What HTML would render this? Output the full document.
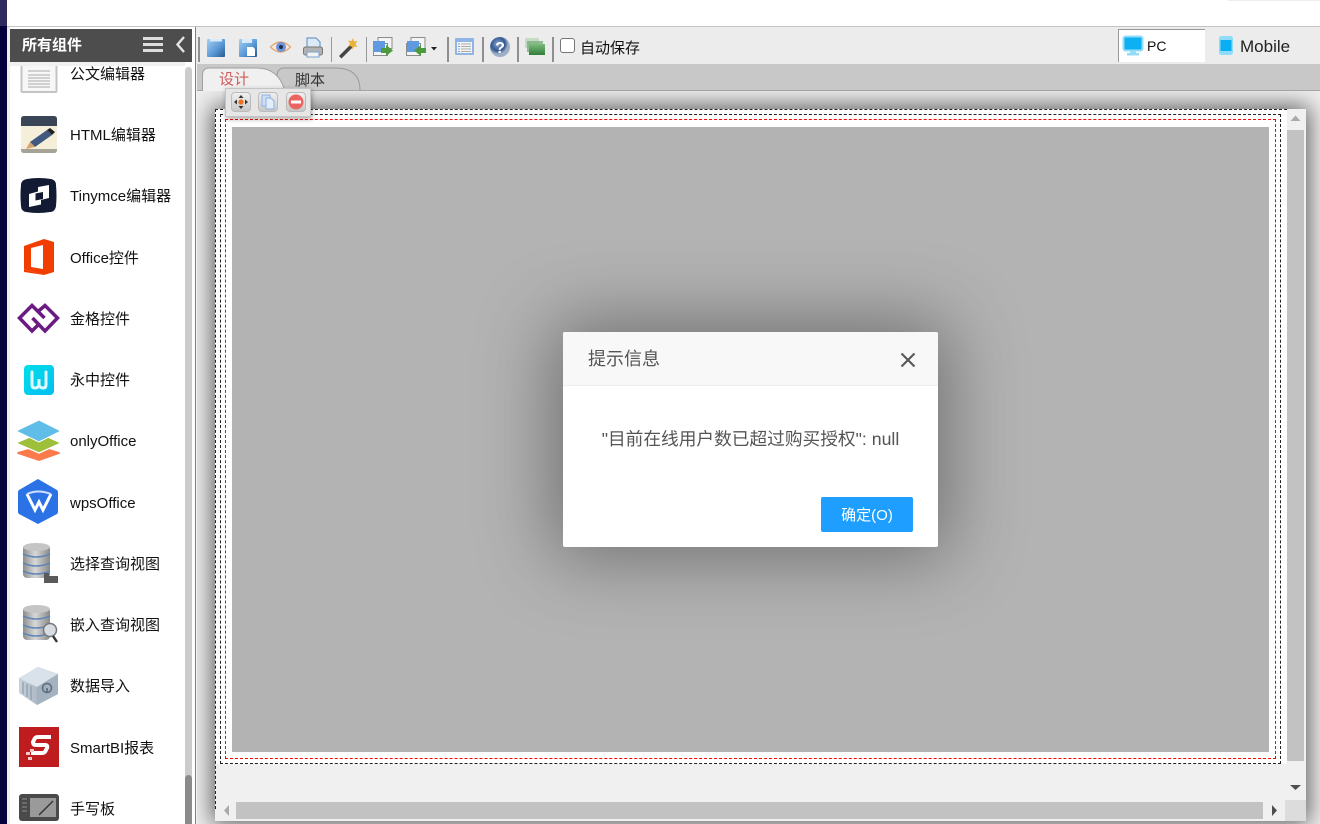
<!DOCTYPE html>
<html><head><meta charset="utf-8">
<style>
html,body{margin:0;padding:0;width:1320px;height:824px;overflow:hidden;background:#fff;font-family:"Liberation Sans","Noto Sans CJK SC",sans-serif;color:#111}
div,svg,span{position:absolute;box-sizing:border-box}
.l{left:70px;margin-top:1px;font-size:15px;line-height:22px;white-space:nowrap;color:#111}
.sep{width:2px;background:#8f8f8f;top:37px;height:25px}
.sep.t{width:1px;background:#999}
.dash{border:1px dashed #222}
</style></head><body>
<div style="left:0;top:0;width:7px;height:26px;background:#2e2a5e"></div>
<div style="left:0;top:26px;width:7px;height:798px;background:#05003c"></div>
<div style="left:7px;top:26px;width:3px;height:798px;background:#eee"></div>
<div style="left:1228px;top:0;width:92px;height:1px;background:#eee"></div>
<div style="left:7px;top:26px;width:1313px;height:1px;background:#c4c4c4"></div>
<div style="left:10px;top:27px;width:185px;height:797px;background:#fff;overflow:hidden" id="side"></div>

<!-- toolbar -->
<div style="left:196px;top:27px;width:1124px;height:37px;background:#ececec"></div>
<div style="left:196px;top:64px;width:1124px;height:26px;background:#c8c8c8"></div>
<div style="left:197px;top:90px;width:1123px;height:1px;background:#a5a5a5"></div>
<div style="left:197px;top:91px;width:1123px;height:733px;background:#efefef;overflow:hidden">
  <div style="left:18px;top:18px;width:1091px;height:712px;background:#f0f0f0;box-shadow:0 0 22px 3px rgba(0,0,0,.62)"></div>
</div>
<div style="left:195px;top:27px;width:1px;height:797px;background:#808080"></div>
<div style="left:196px;top:64px;width:1px;height:760px;background:#f2f2f2"></div>

<!-- left panel -->
<div style="left:10px;top:62px;width:175px;height:4px;background:#f0f0f0"></div>
<div style="left:10px;top:29px;width:182px;height:33px;background:#4d4d4d"></div>
<div style="left:22px;top:35px;font-size:15px;font-weight:700;color:#fff;line-height:22px;white-space:nowrap">所有组件</div>
<div style="left:143px;top:37px;width:20px;height:3px;background:#ddd"></div>
<div style="left:143px;top:43px;width:20px;height:3px;background:#ddd"></div>
<div style="left:143px;top:49px;width:20px;height:3px;background:#ddd"></div>
<svg style="left:174px;top:35px" width="14" height="19"><path d="M10 2L3.500 9.500L10 17" fill="none" stroke="#e6e6e6" stroke-width="2.400"/></svg>
<div style="left:185px;top:67px;width:7px;height:757px;background:#ccc;border-radius:4px 4px 0 0"></div>
<div style="left:185px;top:775px;width:7px;height:49px;background:#8a8a8a;border-radius:4px 4px 0 0"></div>

<!-- side icons -->
<svg style="left:0;top:66px;" width="185" height="758" viewBox="0 66 185 758">
  <defs>
    <linearGradient id="db" x1="0" x2="1" y1="0" y2="0"><stop offset="0" stop-color="#8d8d8d"/><stop offset=".45" stop-color="#d8d8d8"/><stop offset="1" stop-color="#888"/></linearGradient>
    <linearGradient id="sf" x1="0" x2="1" y1="0" y2="0"><stop offset="0" stop-color="#c8d3dc"/><stop offset="1" stop-color="#8c9cab"/></linearGradient>
    <linearGradient id="yz" x1="0" x2="1" y1="0" y2="1"><stop offset="0" stop-color="#00dfe8"/><stop offset="1" stop-color="#05bdf2"/></linearGradient>
    <g id="dbs">
      <rect x="23" y="3" width="27" height="33" rx="4" fill="url(#db)"/>
      <ellipse cx="36.500" cy="5" rx="13.500" ry="4" fill="#c5c5c5"/>
      <path d="M23 12q13 6 27 0M23 21q13 6 27 0M23 29q13 6 27 0" fill="none" stroke="#5f86b8" stroke-width="1.600"/>
    </g>
  </defs>
  <!-- doc -->
  <rect x="21.500" y="60" width="35" height="32" rx="1" fill="#f7f7f7" stroke="#c4c4c4" stroke-width="2"/>
  <path d="M28 71h22M28 75h22M28 78h22M28 81h22M28 84h22M28 87h22" stroke="#aaa" stroke-width="1.100"/>
  <!-- html -->
  <rect x="21" y="116" width="36" height="37" rx="3" fill="#f5efd9"/>
  <path d="M21 119q0-3 3-3h30q3 0 3 3v7H21z" fill="#3a4656"/>
  <path d="M21 149h36v1q0 3-3 3H24q-3 0-3-3z" fill="#a5a296"/>
  <path d="M30 142l17-12 5 5-17 12z" fill="#41597e"/><path d="M26 149l4-7 5 5z" fill="#d6a36e"/><path d="M47 130l3-2 5 4-3 3z" fill="#222"/>
  <!-- tiny -->
  <path d="M27 179q11-2 24 0q5 1 5 6q1 11 0 21q-1 6-6 6q-12 2-24 0q-5-1-5-6q-1-11 0-21q0-5 6-6z" fill="#121b33"/>
  <path d="M29 194L38 191.500V187L49 185V198L41 200V204.500L29 207Z" fill="#fff"/>
  <path d="M35.500 193.500L43 192V199L35.500 200.500Z" fill="#121b33"/>
  <!-- office -->
  <path d="M24 246L44 239l10 3v30l-10 3-20-6z" fill="#f23d00"/><path d="M31 248l12-3v24l-12-2z" fill="#fff"/><path d="M24 269l20 6-20-3z" fill="#f23d00"/>
  <!-- jinge -->
  <path d="M38 325L32 331 19.500 318 32 305.500 44.500 318" fill="none" stroke="#6a1a82" stroke-width="3.500"/>
  <path d="M38 311.500L45 305.500 57.500 318 45 331 32.500 318" fill="none" stroke="#6a1a82" stroke-width="3.500"/>
  <!-- yozo -->
  <rect x="24" y="365" width="30" height="30" rx="4" fill="url(#yz)"/>
  <path d="M32 372v13q0 3 3 3t4-3v-6v6q1 3 4 3t3-3v-13" fill="none" stroke="#dff9ff" stroke-width="3" stroke-linecap="round"/>
  <!-- only -->
  <path d="M39 446l20 6q2 1 0 2l-20 7-21-7q-2-1 0-2z" fill="#fb7a4b"/>
  <path d="M39 433l20 9q2 1 0 2l-20 9-21-9q-2-1 0-2z" fill="#9ebf3a" stroke="#fff" stroke-width="1.300"/>
  <path d="M39 420l20 10q2 1 0 2l-20 10-21-10q-2-1 0-2z" fill="#5fbde8" stroke="#fff" stroke-width="1"/>
  <!-- wps -->
  <path d="M38 479l19 11q1 1 1 2v20q0 1-1 2l-19 10-19-10q-1-1-1-2v-20q0-1 1-2z" fill="#2a72e6"/>
  <path d="M27 494l8 16 4-8 4 8 8-16" fill="none" stroke="#fff" stroke-width="3"/><path d="M27 494q11-5 24 0" fill="none" stroke="#cfe0ff" stroke-width="2"/>
  <!-- db1 -->
  <use href="#dbs" y="542"/>
  <path d="M44 573h5v3h9v7H44z" fill="#5a5a5a"/>
  <!-- db2 -->
  <use href="#dbs" y="604"/>
  <circle cx="50" cy="630" r="6.500" fill="#d7dde2" stroke="#777" stroke-width="1.500"/><path d="M53 636l4 6" stroke="#333" stroke-width="2.400"/>
  <!-- safe -->
  <path d="M19 678L38 667l20 7v20L37 705 19 693z" fill="url(#sf)"/>
  <path d="M19 678l18 9 21-13-20-7z" fill="#d9e2ea"/><path d="M37 687l21-13v20L37 705z" fill="#a4b2bf"/>
  <circle cx="47" cy="688" r="4.500" fill="none" stroke="#596b7c" stroke-width="1.500"/><path d="M47 688v5" stroke="#596b7c" stroke-width="1.600"/>
  <path d="M23 682v12M27 684v13M31 686v14" stroke="#8c9cab" stroke-width="1.200"/>
  <!-- smart -->
  <rect x="19" y="727" width="40" height="40" fill="#be1c1f"/>
  <path d="M51 737H38q-3 0-4 3l-1 2q0 3 3 3H45q3 0 2 3l-1 2q-1 3-4 3H31" fill="none" stroke="#fff" stroke-width="4"/>
  <path d="M30 749h4v3h-4zM26 752h4v3h-4zM28 757h4v3h-4z" fill="#f3c8c8"/>
  <!-- tablet -->
  <rect x="19" y="794" width="40" height="27" rx="3" fill="#4a4a4a"/>
  <rect x="30" y="798" width="26" height="19" fill="#9a9a9a"/>
  <path d="M22 799h5M22 803h5M22 807h5M22 811h5" stroke="#777" stroke-width="1.500"/>
  <path d="M39 815l14-14" stroke="#333" stroke-width="1.400"/>
</svg>
<div class="l" style="top:63px">公文编辑器</div>
<div class="l" style="top:124px">HTML编辑器</div>
<div class="l" style="top:185px">Tinymce编辑器</div>
<div class="l" style="top:247px">Office控件</div>
<div class="l" style="top:308px">金格控件</div>
<div class="l" style="top:369px">永中控件</div>
<div class="l" style="top:430px">onlyOffice</div>
<div class="l" style="top:492px">wpsOffice</div>
<div class="l" style="top:553px">选择查询视图</div>
<div class="l" style="top:614px">嵌入查询视图</div>
<div class="l" style="top:675px">数据导入</div>
<div class="l" style="top:737px">SmartBI报表</div>
<div class="l" style="top:798px">手写板</div>

<!-- toolbar seps -->
<div class="sep" style="left:198px"></div>
<div class="sep t" style="left:331px"></div>
<div class="sep t" style="left:366px"></div>
<div class="sep" style="left:447px"></div>
<div class="sep" style="left:482px"></div>
<div class="sep" style="left:517px"></div>
<div class="sep" style="left:552px"></div>

<svg style="left:196px;top:27px" width="360" height="37" viewBox="196 27 360 37">
  <defs>
    <linearGradient id="bl" x1="0" y1="0" x2="1" y2="1"><stop offset="0" stop-color="#a9d0f0"/><stop offset=".55" stop-color="#5a9ad8"/><stop offset="1" stop-color="#27598f"/></linearGradient>
    <linearGradient id="gr" x1="0" y1="0" x2="0" y2="1"><stop offset="0" stop-color="#7dbb7d"/><stop offset="1" stop-color="#2f7f3a"/></linearGradient>
    <radialGradient id="hp" cx=".4" cy=".35"><stop offset="0" stop-color="#8aa6d2"/><stop offset=".7" stop-color="#33578f"/><stop offset="1" stop-color="#9eaec6"/></radialGradient>
  </defs>
  <rect x="207" y="39" width="18" height="18" rx="1" fill="url(#bl)"/><rect x="210" y="39" width="12" height="2.500" fill="#d9ebfa"/>
  <rect x="239" y="39" width="18" height="18" rx="1" fill="url(#bl)"/><rect x="242" y="39" width="10" height="4" fill="#d9ebfa"/><path d="M247 47h6l2 2v7h-8z" fill="#fff"/>
  <path d="M270.500 47q10-10 20 0q-10 10-20 0z" fill="#fbeadb" stroke="#e0a878" stroke-width="1.300"/><circle cx="281" cy="47" r="5" fill="#6b94d8"/><circle cx="281" cy="47" r="2" fill="#1d2e55"/>
  <path d="M307 38h9l4 4v6h-13z" fill="#dce9f6" stroke="#6f9bc9" stroke-width="1.200"/>
  <rect x="303.500" y="47" width="19" height="8" rx="2" fill="#b2b2b2" stroke="#777"/><rect x="307" y="52" width="12" height="5" fill="#f3f3f3" stroke="#7aa3cf"/>
  <path d="M339 56l11-11 2.500 2.500-11 11z" fill="#444"/><path d="M353 38l1 3.500 3.500-.5-2 3 2 3-3.500-.5-1.500 3-1-3.500-3.500.5 2-3-2-3 3.500.5z" fill="#e8b23a"/>
  <rect x="378" y="37.500" width="14" height="11" fill="#f4f4f4" stroke="#8c8c8c"/><rect x="373.500" y="43.500" width="14" height="12" fill="#f4f4f4" stroke="#8c8c8c"/><rect x="373" y="41" width="12" height="11" fill="#5f9ae0"/><path d="M381 48h5v-3l7 5.500-7 5.500v-3h-5z" fill="#4d9a3c"/>
  <rect x="411" y="37.500" width="14" height="11" fill="#f4f4f4" stroke="#8c8c8c"/><rect x="406.500" y="43.500" width="14" height="12" fill="#f4f4f4" stroke="#8c8c8c"/><rect x="407" y="41" width="12" height="11" fill="#5f9ae0"/><path d="M426 48h-5v-3l-7 5.500 7 5.500v-3h5z" fill="#4d9a3c"/>
  <path d="M431 47h6l-3 3.500z" fill="#222"/>
  <rect x="455" y="38" width="19" height="17" rx="1" fill="#8fb5e6"/><rect x="457" y="42" width="15" height="11" fill="#f4f4f4"/><path d="M461 44h10M461 46.500h10M461 49h10M461 51.500h10" stroke="#aaa"/><path d="M458 44h2M458 46.500h2M458 49h2M458 51.500h2" stroke="#7aa3d8"/>
  <circle cx="500" cy="47" r="10" fill="url(#hp)"/>
  <text x="500" y="53" font-family="Liberation Sans" font-weight="700" font-size="16" text-anchor="middle" fill="#fff">?</text>
  <rect x="525" y="38" width="14" height="10" fill="#c4dcc4"/><rect x="527" y="41" width="16" height="11" fill="#7dae80" opacity=".8"/><rect x="529" y="44" width="16" height="11" fill="url(#gr)"/>
</svg>
<div style="left:560px;top:38px;width:15px;height:15px;background:#fff;border:1px solid #767676;border-radius:3px"></div>
<div style="left:580px;top:38px;font-size:15px;line-height:22px;white-space:nowrap">自动保存</div>

<!-- PC/mobile -->
<div style="left:1118px;top:29px;width:87px;height:33px;background:#fff;border-top:1px solid #999;border-left:1px solid #999"></div>
<svg style="left:1122px;top:35px" width="114" height="22" viewBox="1122 35 114 22">
  <rect x="1123.500" y="36.500" width="19" height="14" rx="2" fill="#0db0f2" stroke="#92dcf8" stroke-width="2"/>
  <path d="M1130 51h6v2h3v2.500h-12V53h3z" fill="#92dcf8"/>
  <rect x="1219" y="36" width="14" height="19" rx="2.500" fill="#8fdcf9"/><rect x="1220.500" y="40" width="11" height="11" fill="#0aaef2"/>
</svg>
<div style="left:1147px;top:36px;font-size:14px;line-height:21px;white-space:nowrap">PC</div>
<div style="left:1240px;top:35px;font-size:17px;line-height:23px;white-space:nowrap;color:#222">Mobile</div>

<!-- tabs -->
<svg style="left:196px;top:64px" width="170" height="28" viewBox="196 64 170 28">
  <path d="M277 89.500V76q0-8 8-8h50q25 0 25 22" fill="#c8c8c8" stroke="#9a9a9a"/>
  <path d="M202.500 90.500V75q0-7 7-7h47q22 0 28 22" fill="#f0f0f0" stroke="#a0a0a0"/>
  <rect x="203" y="88" width="80" height="3" fill="#f0f0f0"/>
</svg>
<div style="left:219px;top:69px;font-size:15px;line-height:22px;color:#cf5a5a;white-space:nowrap">设计</div>
<div style="left:295px;top:70px;font-size:15px;line-height:22px;color:#333;white-space:nowrap">脚本</div>

<!-- canvas -->
<div style="left:215px;top:109px;width:1072px;height:655px;background:#fff"></div>
<div class="dash" style="left:215px;top:109px;width:1072px;height:700px;border-right:0;border-bottom:0"></div>
<div class="dash" style="left:220px;top:114px;width:1061px;height:650px;background:#fff"></div>
<div style="left:225px;top:119px;width:1051px;height:640px;border:1px dashed #f00;background:#fff"></div>
<div style="left:232px;top:127px;width:1037px;height:625px;background:#b3b3b3"></div>

<!-- scrollbars -->
<div style="left:1287px;top:130px;width:17px;height:631px;background:#c2c2c2"></div>
<svg style="left:1285px;top:110px" width="21" height="20"><path d="M10.500 5.500l5 5.500h-10z" fill="#aaa"/></svg>
<svg style="left:1285px;top:778px" width="21" height="20"><path d="M5 7h11l-5.500 5z" fill="#4f4f4f"/></svg>
<div style="left:236px;top:802px;width:1027px;height:17px;background:#c2c2c2"></div>
<svg style="left:216px;top:802px" width="20" height="17"><path d="M13 3v11l-5-5.500z" fill="#aaa"/></svg>
<svg style="left:1265px;top:802px" width="20" height="17"><path d="M7 3v11l5-5.500z" fill="#4f4f4f"/></svg>
<div style="left:1285px;top:800px;width:21px;height:21px;background:#dcdcdc"></div>

<!-- floating tool -->
<div style="left:225px;top:88px;width:86px;height:29px;background:#e6e6e6;border:1px solid #c4c4c4;box-shadow:1px 2px 5px rgba(0,0,0,.35)"></div>
<div style="left:231px;top:92px;width:20px;height:20px;border-radius:4px;background:linear-gradient(#f0f0f0,#c8c8c8);border:1px solid #bbb"></div>
<div style="left:258px;top:92px;width:20px;height:20px;border-radius:4px;background:linear-gradient(#f0f0f0,#c8c8c8);border:1px solid #bbb"></div>
<div style="left:286px;top:92px;width:20px;height:20px;border-radius:4px;background:linear-gradient(#f0f0f0,#c8c8c8);border:1px solid #bbb"></div>
<svg style="left:231px;top:92px" width="76" height="20" viewBox="231 92 76 20">
  <path d="M241 95l2.500 3h-5zM241 109l2.500-3h-5zM234 102l3-2.500v5zM248 102l-3-2.500v5z" fill="#333"/><circle cx="241" cy="102" r="2.600" fill="#f0701e"/>
  <rect x="262" y="95" width="8" height="11" fill="#cfe0f6" stroke="#8fb0dc"/><path d="M266 98h5l3 3v8h-8z" fill="#e2edfb" stroke="#8fb0dc"/>
  <circle cx="296" cy="102" r="7.500" fill="#ea6460"/><rect x="291" y="100.500" width="10" height="3" fill="#fff"/>
</svg>

<!-- dialog -->
<div style="left:563px;top:332px;width:375px;height:215px;background:#fff;border-radius:2px;box-shadow:0 0 75px 10px rgba(0,0,0,.38);overflow:hidden">
  <div style="left:0;top:0;width:375px;height:54px;background:#f8f8f8;border-bottom:1px solid #eee"></div>
  <div style="left:25px;top:15px;font-size:18px;line-height:24px;color:#555;white-space:nowrap">提示信息</div>
  <svg style="left:337px;top:20px" width="16" height="16"><path d="M1.500 1.500l13 13M14.500 1.500l-13 13" stroke="#555" stroke-width="2"/></svg>
  <div style="left:0;top:95px;width:375px;text-align:center;font-size:17.700px;line-height:24px;color:#555;white-space:nowrap">"目前在线用户数已超过购买授权": null</div>
  <div style="left:258px;top:165px;width:92px;height:35px;background:#1e9fff;border-radius:2px;color:#fff;font-size:15px;line-height:37px;text-align:center;white-space:nowrap">确定(O)</div>
</div>
</body></html>
